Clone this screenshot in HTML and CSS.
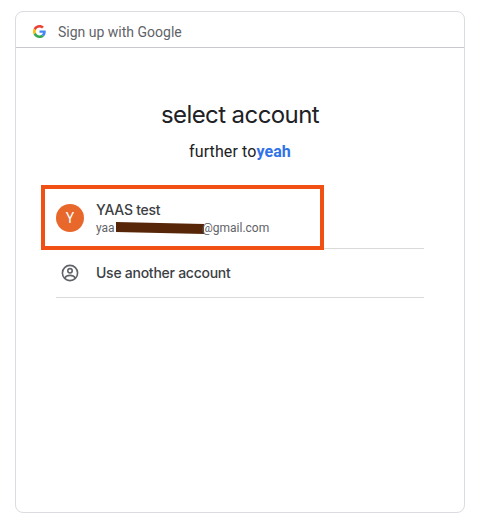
FILE: index.html
```html
<!DOCTYPE html>
<html lang="en">
<head>
<meta charset="utf-8">
<title>Sign up with Google</title>
<link rel="stylesheet" href="styles.css">
</head>
<body>
<main class="card">
  <header class="card-header">
    <svg class="logo" viewBox="0 0 48 48" aria-hidden="true">
      <path fill="#ea4335" d="M24 9.5c3.54 0 6.71 1.22 9.21 3.6l6.85-6.85C35.9 2.38 30.47 0 24 0 14.62 0 6.51 5.38 2.56 13.22l7.98 6.19C12.43 13.72 17.74 9.5 24 9.5z"/>
      <path fill="#4285f4" d="M46.98 24.55c0-1.57-.15-3.09-.38-4.55H24v9.02h12.94c-.58 2.96-2.26 5.48-4.78 7.18l7.73 6c4.51-4.18 7.09-10.36 7.09-17.65z"/>
      <path fill="#fbbc05" d="M10.53 28.59c-.48-1.45-.76-2.99-.76-4.59s.27-3.14.76-4.59l-7.98-6.19C.92 16.46 0 20.12 0 24s.92 7.54 2.56 10.78l7.97-6.19z"/>
      <path fill="#34a853" d="M24 48c6.48 0 11.93-2.13 15.89-5.81l-7.73-6c-2.15 1.45-4.92 2.3-8.16 2.3-6.26 0-11.57-4.22-13.47-9.91l-7.98 6.19C6.51 42.62 14.62 48 24 48z"/>
    </svg>
    <span class="brand">Sign up with Google</span>
  </header>
  <section class="content">
    <h1 class="title">select account</h1>
    <p class="subtitle">further to<a class="app">yeah</a></p>
    <ul class="accounts">
      <li class="account">
        <span class="avatar">Y</span>
        <div class="details">
          <div class="name">YAAS test</div>
          <div class="email"><span class="email-start">yaa</span><svg class="redaction" viewBox="0 0 88 12" aria-hidden="true"><path fill="#572608" d="M0 0 88 2V12L0 10z"/></svg><span class="email-end">@gmail.com</span></div>
        </div>
        <div class="highlight"></div>
      </li>
      <li class="account other">
        <svg class="person" viewBox="0 0 18 18" fill="none" stroke="#5f6368" stroke-width="1.6" aria-hidden="true">
          <circle cx="9" cy="9" r="7.6"/>
          <circle cx="9" cy="6.8" r="2.2"/>
          <path d="M3.5 14.1C4.8 12.3 6.7 11.4 9 11.4s4.2.9 5.5 2.7"/>
        </svg>
        <div class="name">Use another account</div>
      </li>
    </ul>
  </section>
</main>
</body>
</html>
```
FILE: styles.css
```css
* { box-sizing: border-box; }
body {
  margin: 0;
  padding: 11px 15px 14px;
  background: #fff;
  color: #202124;
  font-family: Roboto, "Liberation Sans", sans-serif;
}
.card {
  width: 450px;
  height: 502px;
  border: 1px solid #dadce0;
  border-radius: 8px;
}
.card-header {
  display: flex;
  align-items: center;
  height: 36px;
  padding: 4px 16px 0;
  border-bottom: 1px solid #c7c9cc;
}
.logo { width: 13px; height: 13px; margin: -1px 0 0 1px; }
.brand {
  margin-left: 12px;
  color: #5f6368;
  font-size: 14px;
  line-height: 20px;
}
.content { padding: 51px 40px 0; }
.title {
  margin: 0;
  font-family: Inter, sans-serif;
  font-size: 24px;
  font-weight: 400;
  line-height: 32px;
  letter-spacing: -0.58px;
  text-align: center;
}
.subtitle {
  margin: 9px 0 0;
  font-size: 16px;
  line-height: 24px;
  letter-spacing: 0.1px;
  text-align: center;
}
.app { color: #3072e8; font-weight: 700; }
.accounts { margin: 24px 0 0; padding: 0; list-style: none; }
.account {
  position: relative;
  display: flex;
  align-items: center;
  height: 61px;
  border-bottom: 1px solid #dadada;
}
.avatar {
  width: 28px;
  height: 28px;
  border-radius: 50%;
  background: #e8672b;
  color: #fff;
  font-size: 14px;
  line-height: 28px;
  text-align: center;
}
.details { margin-left: 12px; padding-top: 2px; }
.name {
  color: #3c4043;
  font-family: Inter, sans-serif;
  font-size: 14px;
  font-weight: 500;
  line-height: 18px;
  letter-spacing: -0.26px;
}
.email {
  display: flex;
  align-items: center;
  height: 18px;
  color: #5f6368;
  font-size: 12px;
  line-height: 18px;
}
.email-start { width: 19.5px; }
.redaction { width: 88px; height: 12px; margin-right: -1.5px; }
.highlight {
  position: absolute;
  top: -3px;
  left: -15px;
  width: 283px;
  height: 65px;
  border: 4px solid #f05014;
}
.other { height: 49px; }
.person { width: 18px; height: 18px; margin: 0 17px 0 5px; }
```
